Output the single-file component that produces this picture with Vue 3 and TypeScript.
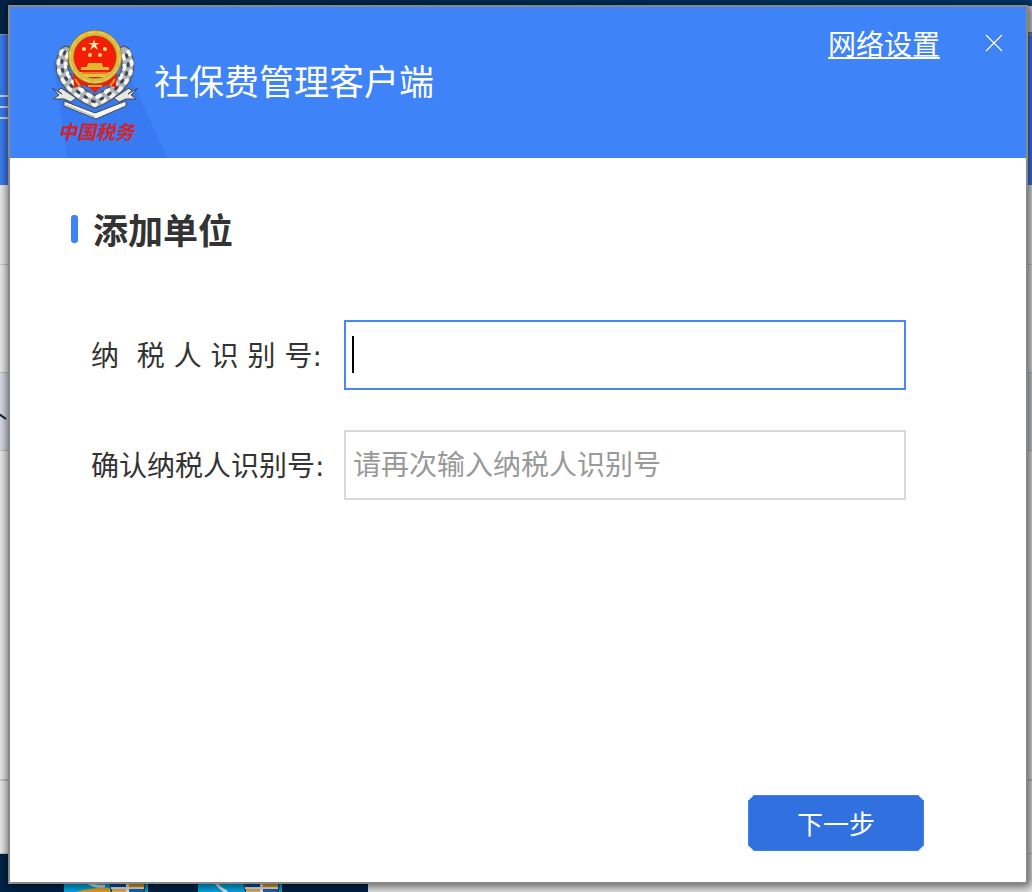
<script setup lang="ts">
import { onMounted, ref } from 'vue'

const taxId = ref('')
const confirmId = ref('')
const taxInput = ref<HTMLInputElement | null>(null)
const active = ref(true)
const shortcuts = ['first', 'second']

onMounted(() => taxInput.value?.focus())
</script>

<template>
  <div class="desktop">
    <div class="backdrop" aria-hidden="true">
      <div class="back-top"></div>
      <div class="back-window">
        <div class="back-header"><i></i><i></i><i></i></div>
        <div class="back-tools"></div>
        <div class="back-panel"></div>
        <div class="back-band">
          <svg width="10" height="12" viewBox="0 0 10 12">
            <path d="M-1 3L6 8" stroke="#082039" stroke-width="2" />
          </svg>
        </div>
        <div class="back-rest"></div>
        <div class="back-foot"></div>
      </div>
      <div class="taskbar">
        <svg v-for="(item, i) in shortcuts" :key="item" class="shortcut" width="84" height="10" viewBox="0 0 84 10">
          <path d="M0 0h84v10H0z" fill="#00aeea" />
          <path v-if="i === 0" d="M24 0q4 5 17 4" fill="none" stroke="#e8edf2" stroke-width="3" />
          <path v-if="i === 0" d="M12 10q18-5 34-4v4z" fill="#eda62f" />
          <path v-if="i === 1" d="M17 0q5 7 12 10" fill="none" stroke="#e8edf2" stroke-width="3" />
          <path d="M45 0h37l-1 10H47z" fill="#3d4a52" />
          <path d="M46 0h16v5H47z" fill="#0650aa" />
          <path d="M65 0h15v5H65z" fill="#e6a31b" />
          <path d="M47 5h33v2H47zM62 0h3v10h-3z" fill="#eee" />
          <path d="M48 7h14v3H48z" fill="#e0b65c" />
          <path d="M65 7h14v3H65z" fill="#1f66b4" />
        </svg>
      </div>
    </div>

    <section class="dialog" role="dialog" aria-labelledby="app-title">
      <header class="header">
        <svg class="emblem" width="90" height="120" viewBox="50 28 90 120" role="img" aria-label="中国税务">
          <path d="M53 60L67 158H167L130 76z" fill="#377af2" />
          <g fill="none" stroke-linecap="round">
            <path d="M66 52C56 68 65 89 95 102C125 89 134 68 124 52" stroke="#525c69" stroke-width="13" />
            <path d="M66 52C56 68 65 89 95 102C125 89 134 68 124 52" stroke="#aeb3b8" stroke-width="10" />
            <path d="M62 51C52 69 62 91 95 105C128 91 138 69 128 51" stroke="#f4f4f0" stroke-width="4" stroke-dasharray="3 7" />
            <path d="M68 54C61 69 70 86 95 98C120 86 129 69 122 54" stroke="#fff" stroke-width="4" stroke-dasharray="3 7" />
            <path d="M65 52C56 68 66 89 95 102C124 89 134 68 125 52" stroke="#3f4852" stroke-width="3" stroke-dasharray="2 7" />
            <path d="M69 58C65 70 72 84 95 95C118 84 125 70 121 58" stroke="#56606b" stroke-width="2" stroke-dasharray="2 6" />
          </g>
          <path d="M73 73L74 88L82 85L90 88L95 93L100 88L108 85L116 88L117 73z" fill="#ea2009" />
          <path d="M75 79l5 7M110 86l5-7M88 86h14" stroke="#d9a72c" stroke-width="2" />
          <circle cx="95" cy="57" r="24" fill="#f61d08" stroke="#806c20" stroke-width="6" />
          <circle cx="95" cy="57" r="24" fill="none" stroke="#dcb83d" stroke-width="5" />
          <circle cx="95" cy="57" r="25" fill="none" stroke="#f0d874" stroke-width="1" stroke-dasharray="7 4" />
          <path d="M94 39l1 4h5l-4 2 2 5-4-3-4 3 2-5-4-2h5z" fill="#ffe9a8" />
          <g fill="#ffe07a">
            <circle cx="84" cy="49" r="2" />
            <circle cx="105" cy="49" r="2" />
            <circle cx="90" cy="55" r="2" />
            <circle cx="100" cy="55" r="2" />
          </g>
          <path d="M88 63h14l1 4h6v3H81v-3h6z" fill="#e1b832" />
          <path d="M79 72h32l-6 5H85z" fill="#e6c33f" />
          <path d="M82 73h26" stroke="#e53b10" stroke-width="1" />
          <path d="M52 88L62 94L58 91L61 88L76 98L71 102L64 99L53 99L59 95z" fill="#e7e7e4" stroke="#3f4751" stroke-width="1" />
          <path d="M138 88L128 94L132 91L129 88L114 98L119 102L126 99L136 99L131 95z" fill="#e7e7e4" stroke="#3f4751" stroke-width="1" />
          <path d="M64 101L95 113L126 101V106L96 119L64 106z" fill="#f7f7f4" stroke="#3f4751" stroke-width="1" />
          <path d="M66 105L95 117" stroke="#a6a9aa" stroke-width="1" />
          <text x="58" y="139" class="emblem-name">中国税务</text>
        </svg>
        <h1 id="app-title" class="title">社保费管理客户端</h1>
        <nav class="actions">
          <a href="#network" class="network">网络设置</a>
          <button type="button" class="close" aria-label="关闭">
            <svg width="18" height="18" viewBox="0 0 18 18">
              <path d="M1 1L17 17M17 1L1 17" stroke="#2f63c4" stroke-width="3" opacity=".4" />
              <path d="M1 1L17 17M17 1L1 17" stroke="#fff" stroke-width="1.4" />
            </svg>
          </button>
        </nav>
      </header>

      <main class="content">
        <h2 class="heading">添加单位</h2>
        <form class="form" @submit.prevent>
          <label for="tax-id">纳&nbsp;&nbsp;税&nbsp;人&nbsp;识&nbsp;别&nbsp;号:</label>
          <div class="field">
            <input id="tax-id" ref="taxInput" v-model="taxId" type="text" class="current" autocomplete="off" @focus="active = true" @blur="active = false" />
            <span v-if="active && !taxId" class="caret"></span>
          </div>
          <label for="confirm-id">确认纳税人识别号:</label>
          <div class="field">
            <input id="confirm-id" v-model="confirmId" type="text" autocomplete="off" placeholder="请再次输入纳税人识别号" />
          </div>
        </form>
        <button type="button" class="next">下一步</button>
      </main>
    </section>
  </div>
</template>

<style>
body {
  margin: 0;
}
</style>

<style scoped>
* {
  box-sizing: border-box;
}

.desktop {
  position: relative;
  display: flex;
  min-height: 100vh;
  padding: 5px 4px 8px 8px;
  overflow: hidden;
  font-family: "Noto Sans CJK SC", sans-serif;
  color: #333;
}

.backdrop {
  position: absolute;
  inset: 0;
  display: flex;
  flex-direction: column;
  background: #002448;
}

.back-top {
  height: 34px;
  background: linear-gradient(90deg, #002448, #003b70);
  border-right: 6px solid #d8d8d8;
  border-image: linear-gradient(#003b70 0 7px, #d8d8d8 7px 31px, #777 31px) 1;
}

.back-window {
  flex: 1;
  display: flex;
  flex-direction: column;
  background: #ededed;
  border-top: 1px solid #999;
}

.back-header {
  height: 150px;
  padding-top: 60px;
  background: #3b7cf0;
}

.back-header i {
  display: block;
  width: 8px;
  height: 2px;
  margin-bottom: 9px;
  background: #c8d9f8;
}

.back-tools {
  height: 80px;
  border-bottom: 1px solid #ccc;
}

.back-panel {
  height: 107px;
}

.back-band {
  height: 79px;
  padding-top: 38px;
  line-height: 0;
  background: #dadde6;
  border: solid #c5c5bd;
  border-width: 1px 0;
}

.back-rest {
  flex: 1;
}

.back-foot {
  height: 75px;
  border: solid #c9c9c1;
  border-width: 2px 0 1px;
}

.taskbar {
  display: flex;
  align-items: flex-end;
  gap: 50px;
  height: 38px;
  padding-left: 64px;
  background: linear-gradient(90deg, #002448 368px, #ececec 368px);
}

.shortcut {
  display: block;
}

.dialog {
  position: relative;
  flex: 1;
  display: flex;
  flex-direction: column;
  background: #fff;
  border: 2px solid #888;
  box-shadow: 1px 1px 9px 2px rgba(0, 0, 0, 0.6);
}

.header {
  display: flex;
  align-items: flex-start;
  gap: 14px;
  height: 151px;
  padding-left: 40px;
  background: #3e83f8;
  overflow: hidden;
}

.emblem {
  flex: none;
  margin-top: 21px;
  overflow: visible;
}

.emblem-name {
  font-size: 19px;
  font-style: italic;
  font-weight: 700;
  fill: #d52229;
}

.title {
  margin: 49px 0 0;
  font-size: 35px;
  font-weight: 400;
  line-height: 48px;
  color: #fff;
}

.actions {
  display: flex;
  align-items: center;
  gap: 40px;
  margin: 16px 18px 0 auto;
}

.network {
  font-size: 28px;
  line-height: 40px;
  color: #fff;
  text-decoration-thickness: 2px;
  text-underline-offset: 2px;
}

.close {
  display: grid;
  place-items: center;
  width: 28px;
  height: 28px;
  padding: 0;
  background: none;
  border: 0;
}

.content {
  flex: 1;
  display: flex;
  flex-direction: column;
  padding: 47px 102px 31px 61px;
}

.heading {
  display: flex;
  align-items: center;
  gap: 15px;
  margin: 0;
  font-size: 35px;
  font-weight: 700;
  line-height: 48px;
}

.heading::before {
  width: 7px;
  height: 28px;
  border-radius: 3px;
  background: #3e83f8;
  content: "";
}

.form {
  display: grid;
  grid-template-columns: 253px 1fr;
  align-items: center;
  row-gap: 40px;
  margin: 67px 18px 40px 20px;
  font-size: 28px;
}

.form label {
  padding-top: 4px;
  font-family: "DejaVu Sans", "Noto Sans CJK SC", sans-serif;
  line-height: 40px;
  white-space: nowrap;
}

.field {
  position: relative;
}

.field input {
  display: block;
  width: 100%;
  height: 70px;
  padding: 0 7px 4px;
  font: inherit;
  color: #333;
  background: #fff;
  border: 2px solid #d6dade;
  border-radius: 0;
  outline: 0;
}

.field input:focus,
.field .current {
  border-color: #4a87f3;
}

.field .current:placeholder-shown,
.field .current {
  caret-color: transparent;
}

.field input::placeholder {
  color: #999;
  opacity: 1;
}

.caret {
  position: absolute;
  top: 16px;
  left: 8px;
  width: 2px;
  height: 37px;
  background: #000;
  pointer-events: none;
}

.next {
  align-self: flex-end;
  width: 176px;
  height: 56px;
  margin-top: auto;
  padding: 0;
  font-family: inherit;
  font-size: 26px;
  line-height: 40px;
  color: #fff;
  background: #3071df;
  border: 1px solid #4080f0;
  clip-path: polygon(6px 0, calc(100% - 6px) 0, 100% 6px, 100% calc(100% - 6px), calc(100% - 6px) 100%, 6px 100%, 0 calc(100% - 6px), 0 6px);
}
</style>
